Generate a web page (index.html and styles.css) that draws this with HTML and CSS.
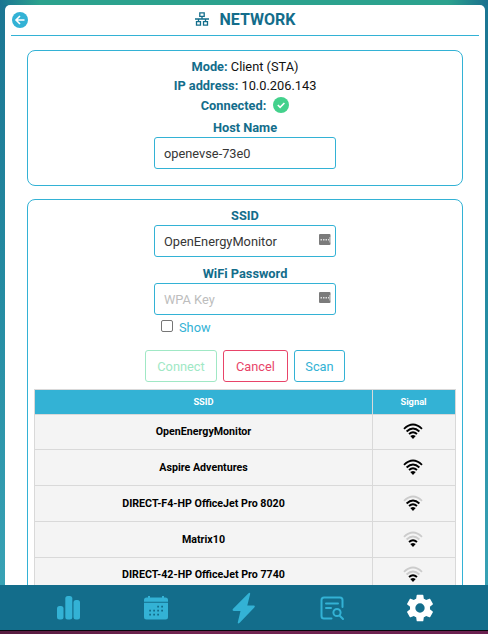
FILE: index.html
```html
<!DOCTYPE html>
<html lang="en">
<head>
<meta charset="utf-8">
<title>Network</title>
<link rel="stylesheet" href="styles.css">
</head>
<body>
<svg class="defs" width="0" height="0">
  <defs>
    <path id="w4" d="M1 5.800Q10-2.800 19 5.800"/>
    <path id="w3" d="M3.600 8.500Q10 2.400 16.400 8.500"/>
    <path id="w2" d="M6 11Q10 7.400 14 11"/>
    <path id="w1" d="M8.700 13.200Q10 12.500 11.300 13.200L10 14.600Z"/>
  </defs>
</svg>
<main class="screen">
  <div class="card">
    <header class="head">
      <svg class="back" viewBox="0 0 16 16"><circle cx="8" cy="8" r="8"/><path d="M12.500 8H4M8 4L4 8l4 4"/></svg>
      <svg class="lan" viewBox="0 0 14 14"><path d="M4.800 .8h4.400v3.600H4.800zM1.500 9.600h4v3.600h-4zM8.500 9.600h4v3.600h-4zM7 4.400V7M0 7h14M3.500 7v2.600M10.500 7v2.600"/></svg>
      <h1>NETWORK</h1>
    </header>
    <section class="box status">
      <p class="line"><b>Mode:</b> Client (STA)</p>
      <p class="line"><b>IP address:</b> 10.0.206.143</p>
      <p class="line connected"><b>Connected:</b><svg class="ok" viewBox="0 0 16 16"><circle cx="8" cy="8" r="8"/><path d="M4.800 8l2.300 2.300 4.300-4.300"/></svg></p>
      <label class="label host">Host Name</label>
      <div class="field">openevse-73e0</div>
    </section>
    <section class="box wifi">
      <label class="label">SSID</label>
      <div class="field">OpenEnergyMonitor<svg class="key" viewBox="0 0 12 11"><rect width="11.500" height="11" rx="1"/><path d="M1.500 5h1.500v1.500H1.500zM4 5h1.500v1.500H4zM6.500 5H8v1.500H6.500zM9 5h1v1.500H9zM10.500 3h1v5.500h-1z"/></svg></div>
      <label class="label second">WiFi Password</label>
      <div class="field placeholder">WPA Key<svg class="key" viewBox="0 0 12 11"><rect width="11.500" height="11" rx="1"/><path d="M1.500 5h1.500v1.500H1.500zM4 5h1.500v1.500H4zM6.500 5H8v1.500H6.500zM9 5h1v1.500H9zM10.500 3h1v5.500h-1z"/></svg></div>
      <div class="show"><span class="check"></span>Show</div>
      <div class="buttons">
        <button class="btn connect">Connect</button>
        <button class="btn cancel">Cancel</button>
        <button class="btn scan">Scan</button>
      </div>
      <div class="table">
        <div class="row th"><span>SSID</span><span>Signal</span></div>
        <div class="row first"><span>OpenEnergyMonitor</span><span><svg class="sig" viewBox="0 0 20 16"><use href="#w4"/><use href="#w3"/><use href="#w2"/><use href="#w1"/></svg></span></div>
        <div class="row"><span>Aspire Adventures</span><span><svg class="sig" viewBox="0 0 20 16"><use href="#w4"/><use href="#w3"/><use href="#w2"/><use href="#w1"/></svg></span></div>
        <div class="row"><span>DIRECT-F4-HP OfficeJet Pro 8020</span><span><svg class="sig" viewBox="0 0 20 16"><use class="off" href="#w4"/><use href="#w3"/><use href="#w2"/><use href="#w1"/></svg></span></div>
        <div class="row"><span>Matrix10</span><span><svg class="sig" viewBox="0 0 20 16"><use class="off" href="#w4"/><use class="off" href="#w3"/><use href="#w2"/><use href="#w1"/></svg></span></div>
        <div class="row last"><span>DIRECT-42-HP OfficeJet Pro 7740</span><span><svg class="sig" viewBox="0 0 20 16"><use class="off" href="#w4"/><use class="off" href="#w3"/><use href="#w2"/><use href="#w1"/></svg></span></div>
      </div>
    </section>
  </div>
</main>
<nav class="nav">
  <svg viewBox="0 0 32 32"><rect x="5" y="14" width="6.500" height="13.500" rx="2.500"/><rect x="13.300" y="4" width="7" height="23.500" rx="2.500"/><rect x="21.500" y="8" width="6.500" height="19.500" rx="2.500"/></svg>
  <svg viewBox="0 0 32 32"><path d="M4 9.800V8q0-2.500 2.500-2.500H8V4h2v1.500h12V4h2v1.500h1.500Q28 5.500 28 8v1.800zM4 10.800h24V25q0 2.500-2.500 2.500h-19Q4 27.500 4 25z"/><path class="dots" d="M17.200 13.700h1.800v1.800h-1.800zM21.200 13.700H23v1.800h-1.800zM9.200 17.700H11v1.800H9.200zM13.200 17.700H15v1.800h-1.800zM17.200 17.700H19v1.800h-1.800zM21.200 17.700H23v1.800h-1.800zM9.200 21.700H11v1.800H9.200zM13.200 21.700H15v1.800h-1.800zM17.200 21.700H19v1.800h-1.800z"/></svg>
  <svg viewBox="0 0 32 32"><path d="M20.500 1.200q2-1.200 1.600 1l-2.800 11.300h6.500q1.800.3.500 2L11.700 30.800q-2.200 1.500-1.900-.6L12.500 19H5.700q-2-.3-.6-2.200z"/></svg>
  <svg class="log" viewBox="0 0 32 32"><path d="M26.500 15V8q0-2.500-2.500-2.500H8Q5.500 5.500 5.500 8v16q0 2.500 2.500 2.500h7.500M10 11.500h12M10 16h5M23.500 23.500L27 27"/><circle cx="21" cy="20.500" r="3.600"/></svg>
  <svg class="gear" viewBox="0 0 24 24"><path d="M12 15.500A3.500 3.500 0 0 1 8.500 12 3.500 3.500 0 0 1 12 8.500a3.500 3.500 0 0 1 3.500 3.500 3.500 3.500 0 0 1-3.500 3.500m7.430-2.530c.04-.32.07-.64.07-.97s-.03-.66-.07-1l2.110-1.630c.19-.15.24-.42.12-.64l-2-3.460c-.12-.22-.39-.31-.61-.22l-2.490 1c-.52-.39-1.060-.73-1.690-.98l-.37-2.650A.506.506 0 0 0 14 2h-4c-.25 0-.46.18-.5.420l-.37 2.650c-.63.25-1.170.59-1.690.98l-2.490-1c-.22-.09-.49 0-.61.220l-2 3.460c-.13.220-.07.490.12.640L4.570 11c-.04.340-.07.670-.07 1s.03.650.07.970l-2.110 1.660c-.19.150-.25.420-.12.640l2 3.460c.12.220.39.300.61.220l2.490-1.010c.52.400 1.060.740 1.690.990l.37 2.650c.04.240.25.420.5.420h4c.25 0 .46-.18.5-.42l.37-2.650c.63-.26 1.170-.59 1.690-.99l2.490 1.010c.22.080.49 0 .61-.22l2-3.460c.12-.22.07-.49-.12-.64z"/></svg>
</nav>
<footer class="edge"></footer>
</body>
</html>
```

FILE: styles.css
```css
* { box-sizing: border-box; }
body {
  margin: 0;
  height: 634px;
  display: flex;
  flex-direction: column;
  overflow: hidden;
  font-family: Roboto, sans-serif;
  font-size: 12.8px;
  color: #111;
}
.defs { display: block; }
.screen {
  height: 585px;
  padding: 5px 3px 0 5px;
  overflow: hidden;
  background: linear-gradient(90deg, #1a7592 0, #2ca28e 40px, #2ca28e 448px, #1a6f8e 100%) top / 100% 5px no-repeat,
    linear-gradient(#1b7592, #248ba2 50%, #38a2b5);
}
.card {
  height: 620px;
  padding: 0 6px;
  background: #fff;
  border-radius: 5px 5px 0 0;
}
.head {
  position: relative;
  height: 31px;
  display: flex;
  align-items: center;
  justify-content: center;
  gap: 11px;
  padding-bottom: 1px;
  border-bottom: 1px solid #33b2d5;
  color: #136d8b;
}
.head h1 { margin: 0; font-size: 16px; line-height: 20px; font-weight: 700; }
.back { position: absolute; left: .5px; top: 6.500px; width: 16px; height: 16px; fill: #33b2d5; }
.back path { fill: none; stroke: #fff; stroke-width: 1.600; }
.lan { width: 14px; height: 14px; margin-bottom: 1px; fill: none; stroke: #136d8b; stroke-width: 1.300; }
.box {
  margin: 0 16px;
  border: 1px solid #33b2d5;
  border-radius: 8px;
  display: flex;
  flex-direction: column;
  align-items: center;
}
.status { margin-top: 14px; height: 136px; padding-top: 6px; }
.line { margin: 0; height: 19px; line-height: 19px; }
.line b, .label { color: #136d8b; font-weight: 700; }
.connected { display: flex; align-items: center; gap: 7px; height: 20px; }
.ok { width: 16px; height: 16px; fill: #43d18c; }
.ok path { fill: none; stroke: #fff; stroke-width: 1.600; }
.label { height: 22px; line-height: 22px; }
.label.host { padding-top: 2px; }
.field {
  width: 182px;
  height: 32px;
  padding: 0 4px 0 9px;
  display: flex;
  align-items: center;
  justify-content: space-between;
  border: 1px solid #33b2d5;
  border-radius: 3px;
  color: #363636;
}
.placeholder { color: #bdbdbd; }
.key { width: 12px; height: 11px; margin-bottom: 4px; fill: #7b7b7b; }
.key path { fill: #ddd; }
.wifi { margin-top: 13px; height: 430px; padding: 5px 6px 0; }
.wifi .label { height: 20px; }
.wifi .second { height: 26px; padding-top: 6px; }
.show {
  width: 182px;
  height: 24px;
  display: flex;
  align-items: center;
  gap: 6px;
  padding-left: 7px;
  color: #33b2d5;
}
.check { width: 12px; height: 12px; margin-bottom: 3px; border: 1px solid #767676; border-radius: 2px; }
.buttons { display: flex; gap: 6px; margin: 11px 0 7px; }
.btn {
  height: 32px;
  padding: 0;
  background: #fff;
  border: 1px solid;
  border-radius: 3px;
  font: 12.8px Roboto, sans-serif;
}
.connect { width: 72px; color: #a0e8c5; }
.cancel { width: 65px; color: #e84469; }
.scan { width: 51px; color: #33b2d5; }
.table { width: 422px; border: 1px solid #d9d9d9; background: #f4f4f4; }
.row {
  height: 36px;
  display: grid;
  grid-template-columns: 337px 1fr;
  border-bottom: 1px solid #d9d9d9;
  font-size: 10.660px;
  font-weight: 700;
  color: #000;
}
.row span { display: flex; align-items: center; justify-content: center; }
.row span + span { border-left: 1px solid #d9d9d9; padding-right: 1px; }
.th { height: 25px; background: #33b2d5; color: #fff; font-size: 9.300px; }
.th span { padding-bottom: 1px; }
.first { height: 35px; }
.first span, .last span { padding-bottom: 1px; }
.last { height: 35px; }
.sig { width: 20px; height: 16px; margin: 0 1px 2px 0; fill: none; stroke: #000; stroke-width: 1.800; }
.off { stroke: #ccc; }
.nav {
  height: 45px;
  display: flex;
  justify-content: space-between;
  align-items: center;
  padding: 0 52px;
  background: #136d8b;
}
.nav svg { width: 32px; height: 32px; fill: #33b2d5; }
.nav .dots { fill: #136d8b; }
.nav .log { fill: none; stroke: #33b2d5; stroke-width: 2; stroke-linecap: round; }
.nav .gear { fill: #fff; }
.edge { height: 4px; border-top: 1px solid #08080d; background: linear-gradient(90deg, #571c40, #742652 40%, #6b2150); }
```
